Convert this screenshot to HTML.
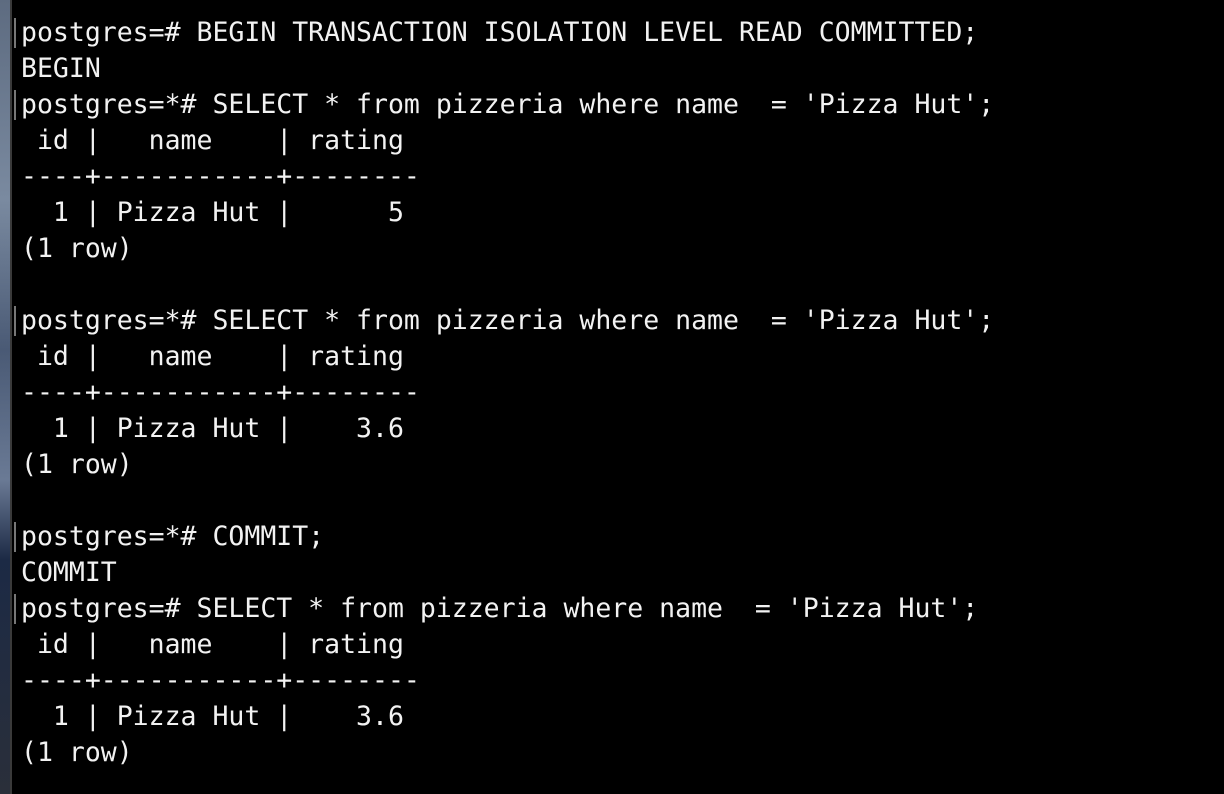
<!DOCTYPE html>
<html><head><style>
html,body{margin:0;width:1224px;height:794px;overflow:hidden;background:#000;}
.strip{position:absolute;left:0;top:0;width:10px;height:794px;background:linear-gradient(#5d6b80 0,#7a8aa0 200px,#4a5a75 350px,#6a7a95 480px,#1c2a45 560px,#2a2f3a 794px);}
.edge{position:absolute;left:10px;top:0;width:2px;height:794px;background:#3a3a3a;}
pre{position:absolute;left:21px;top:15px;margin:0;font-family:"DejaVu Sans Mono","Liberation Mono",monospace;font-size:26.5px;line-height:36px;color:#f2f2f2;}
.b{position:absolute;left:14px;width:2px;height:30px;background:#777;}
</style></head><body>
<div class="strip"></div><div class="edge"></div>
<div class="b" style="top:18px"></div>
<div class="b" style="top:90px"></div>
<div class="b" style="top:306px"></div>
<div class="b" style="top:522px"></div>
<div class="b" style="top:594px"></div>
<pre>postgres=# BEGIN TRANSACTION ISOLATION LEVEL READ COMMITTED;
BEGIN
postgres=*# SELECT * from pizzeria where name  = 'Pizza Hut';
 id |   name    | rating
----+-----------+--------
  1 | Pizza Hut |      5
(1 row)

postgres=*# SELECT * from pizzeria where name  = 'Pizza Hut';
 id |   name    | rating
----+-----------+--------
  1 | Pizza Hut |    3.6
(1 row)

postgres=*# COMMIT;
COMMIT
postgres=# SELECT * from pizzeria where name  = 'Pizza Hut';
 id |   name    | rating
----+-----------+--------
  1 | Pizza Hut |    3.6
(1 row)</pre>
</body></html>
